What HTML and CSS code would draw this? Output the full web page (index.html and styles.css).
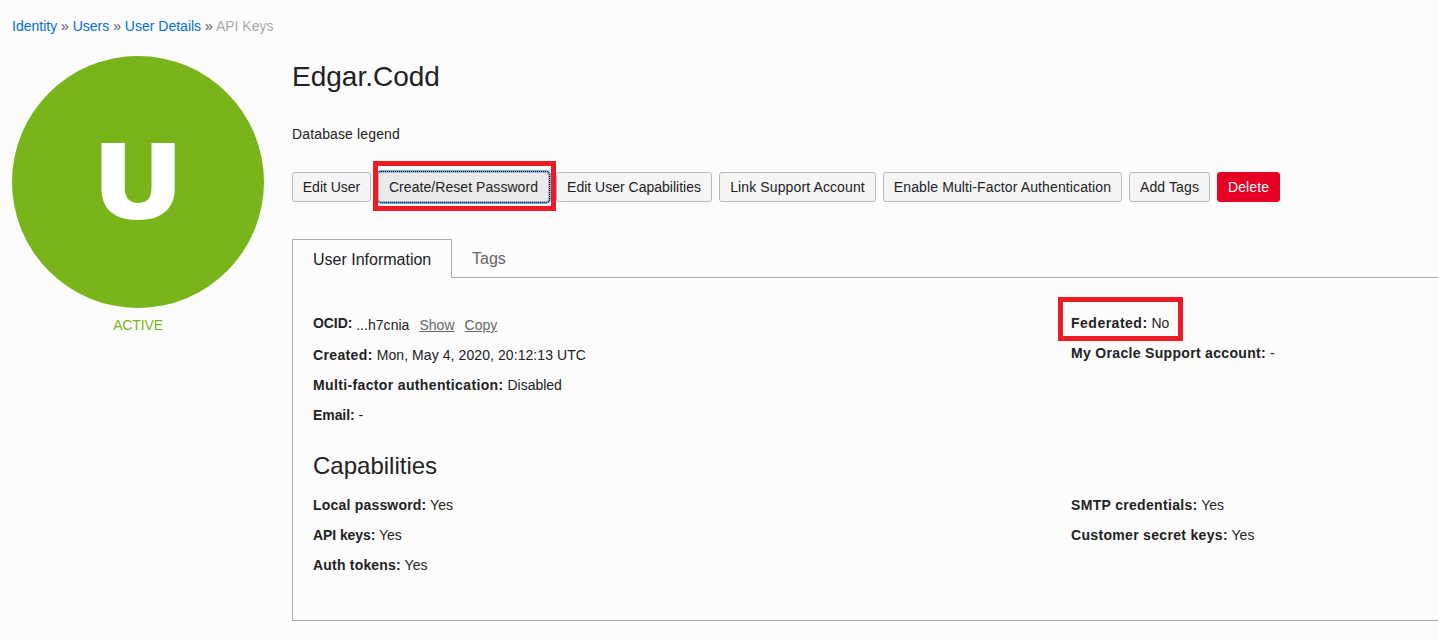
FILE: index.html
```html
<!DOCTYPE html>
<html lang="en">
<head>
<meta charset="utf-8">
<title>User Details</title>
<link rel="stylesheet" href="styles.css">
</head>
<body>
<nav class="breadcrumb"><a href="#">Identity</a> » <a href="#">Users</a> » <a href="#">User Details</a> » <span class="current">API Keys</span></nav>
<div class="page">
  <aside class="badge">
    <div class="avatar"><span class="letter">U</span></div>
    <div class="status">ACTIVE</div>
  </aside>
  <main class="main">
    <h1 class="name">Edgar.Codd</h1>
    <p class="description">Database legend</p>
    <div class="actions">
      <button class="btn edit">Edit User</button>
      <div class="marked"><button class="btn focused">Create/Reset Password</button></div>
      <button class="btn capabilities">Edit User Capabilities</button>
      <button class="btn support">Link Support Account</button>
      <button class="btn mfa">Enable Multi-Factor Authentication</button>
      <button class="btn add">Add Tags</button>
      <button class="btn danger">Delete</button>
    </div>
    <div class="tabs">
      <div class="tab active">User Information</div>
      <div class="tab">Tags</div>
    </div>
    <section class="panel">
      <div class="columns info">
        <div>
          <div class="row ocid"><b class="snug">OCID:</b> <span class="value">...h7cnia <a href="#">Show</a> <a href="#">Copy</a></span></div>
          <div class="row created"><b class="wide">Created:</b> Mon, May 4, 2020, 20:12:13 UTC</div>
          <div class="row"><b class="wide">Multi-factor authentication:</b> Disabled</div>
          <div class="row"><b class="snug">Email:</b> -</div>
        </div>
        <div>
          <div class="row"><span class="federated"><b class="wider">Federated:</b> No</span></div>
          <div class="row"><b class="medium">My Oracle Support account:</b> -</div>
        </div>
      </div>
      <h2 class="heading">Capabilities</h2>
      <div class="columns">
        <div>
          <div class="row"><b>Local password:</b> Yes</div>
          <div class="row"><b class="snug">API keys:</b> Yes</div>
          <div class="row"><b>Auth tokens:</b> Yes</div>
        </div>
        <div>
          <div class="row"><b class="medium">SMTP credentials:</b> Yes</div>
          <div class="row"><b class="medium">Customer secret keys:</b> Yes</div>
        </div>
      </div>
    </section>
  </main>
</div>
</body>
</html>
```
FILE: styles.css
```css
* { box-sizing: border-box; }
body {
  margin: 0;
  height: 640px;
  overflow: hidden;
  background: #fcfcfc;
  color: #222;
  font: 14px/20px "Liberation Sans", Arial, sans-serif;
}
.breadcrumb { padding: 16px 12px 0; height: 56px; color: #555; white-space: nowrap; }
.breadcrumb a { color: #006fd6; text-decoration: none; }
.breadcrumb .current { color: #aaa; }
.page { display: flex; padding-left: 12px; }
.badge { flex: none; width: 280px; }
.avatar {
  display: flex;
  align-items: center;
  justify-content: center;
  width: 252px;
  height: 252px;
  border-radius: 50%;
  background: #78b41a;
  color: #fff;
  font: 800 106px/252px "Open Sans", sans-serif;
}
.letter { transform: translateY(-4px) scaleX(1.13); }
.status { width: 252px; padding-top: 7px; color: #78b41a; text-align: center; letter-spacing: -0.15px; }
.main { flex: 1; min-width: 0; }
.name { margin: 0; height: 68px; font-size: 28px; font-weight: 400; line-height: 42px; }
.description { margin: 0; height: 48px; letter-spacing: 0.14px; }
.actions { display: flex; gap: 7px; height: 67px; align-items: flex-start; }
.btn {
  flex: none;
  display: block;
  height: 30px;
  padding: 0;
  border: 1px solid #b4b9c3;
  border-radius: 3px;
  background: #f5f5f5;
  color: #222;
  font: inherit;
  white-space: nowrap;
}
.btn.edit { width: 79px; letter-spacing: -0.02px; }
.btn.focused {
  width: 171px;
  background: #eaeaea;
  letter-spacing: 0.06px;
  outline: 1px dotted #000;
  outline-offset: 0;
  box-shadow: 0 0 0 2px #77aee8;
}
.btn.capabilities { width: 156px; }
.btn.support { width: 157px; letter-spacing: 0.12px; }
.btn.mfa { width: 239px; letter-spacing: 0.12px; }
.btn.add { width: 81px; letter-spacing: 0.12px; }
.btn.danger { width: 63px; border-color: #e60024; background: #e60024; color: #fff; letter-spacing: 0.1px; }
.marked { position: relative; flex: none; }
.marked::after { content: ""; position: absolute; inset: -11px -7px -9px -5px; border: 5px solid #ed1c24; }
.tabs { display: flex; height: 39px; font-size: 16px; white-space: nowrap; }
.tabs::after { content: ""; flex: 1; border-bottom: 1px solid #aaa; }
.tab { padding: 10px 20px 0; color: #666; line-height: 19px; border-bottom: 1px solid #aaa; }
.tab.active { flex: none; width: 160px; line-height: 20px; border: 1px solid #aaa; border-bottom: 0; color: #222; }
.panel { height: 343px; padding: 30px 0 0 20px; border: solid #aaa; border-width: 0 0 1px 1px; }
.columns { display: grid; grid-template-columns: 758px 1fr; }
.info { height: 143px; }
.row { height: 30px; line-height: 30px; white-space: nowrap; }
.row b { letter-spacing: 0.2px; }
.row .snug { letter-spacing: -0.08px; }
.row .medium { letter-spacing: 0.32px; }
.row .wide { letter-spacing: 0.36px; }
.row .wider { letter-spacing: 0.5px; }
.created { letter-spacing: 0.08px; }
.ocid { height: 32px; }
.ocid .value { position: relative; top: 2px; letter-spacing: 0.04px; }
.ocid a { margin-left: 6px; color: #666; }
.federated { position: relative; }
.federated::after { content: ""; position: absolute; inset: -18px -14px -10px -13px; border: 5px solid #ed1c24; }
.heading { margin: 0; height: 39px; font-size: 24px; font-weight: 400; line-height: 29px; }
```
